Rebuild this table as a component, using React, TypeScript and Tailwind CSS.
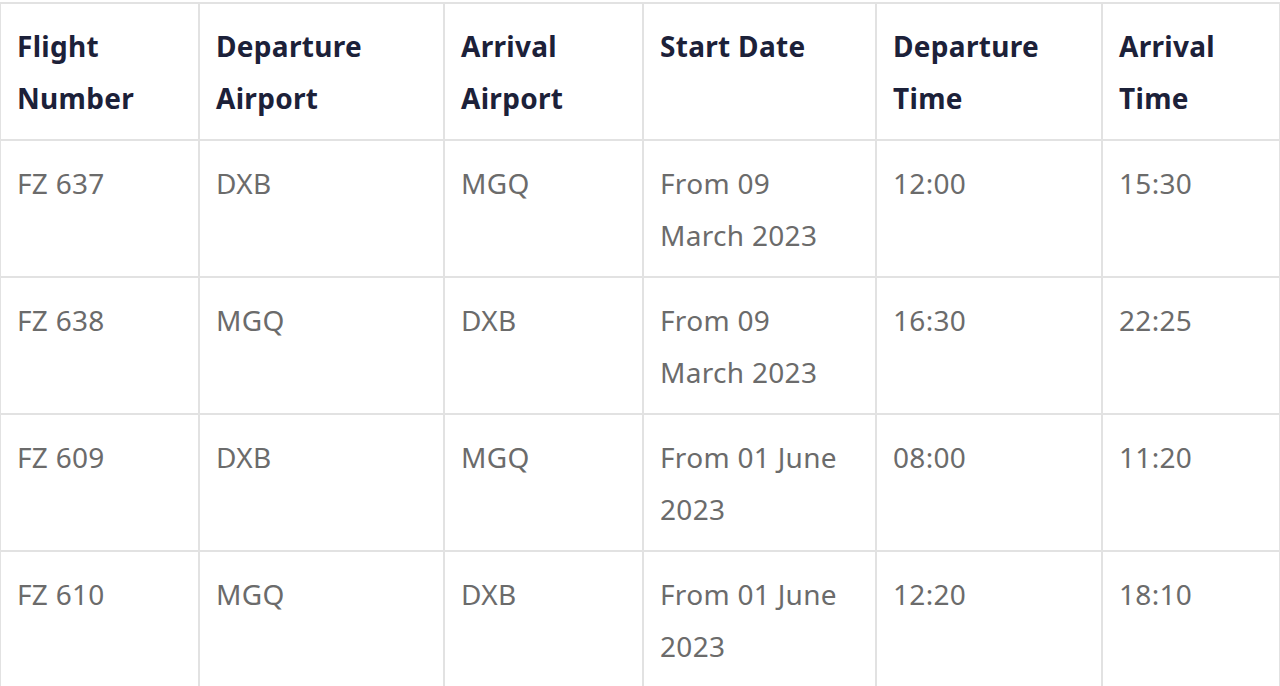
import React from 'react';

type Row = {
  flight: string;
  from: string;
  to: string;
  start: [string, string];
  dep: string;
  arr: string;
};

const rows: Row[] = [
  { flight: 'FZ 637', from: 'DXB', to: 'MGQ', start: ['From 09', 'March 2023'], dep: '12:00', arr: '15:30' },
  { flight: 'FZ 638', from: 'MGQ', to: 'DXB', start: ['From 09', 'March 2023'], dep: '16:30', arr: '22:25' },
  { flight: 'FZ 609', from: 'DXB', to: 'MGQ', start: ['From 01 June', '2023'], dep: '08:00', arr: '11:20' },
  { flight: 'FZ 610', from: 'MGQ', to: 'DXB', start: ['From 01 June', '2023'], dep: '12:20', arr: '18:10' },
];

const headers: [string, string?][] = [
  ['Flight', 'Number'],
  ['Departure', 'Airport'],
  ['Arrival', 'Airport'],
  ['Start Date'],
  ['Departure', 'Time'],
  ['Arrival', 'Time'],
];

const widths = ['w-[199px]', 'w-[245px]', 'w-[199px]', 'w-[233px]', 'w-[226px]', 'w-[178px]'];

const cell = 'border-2 border-[#e2e2e2] align-top pl-[16px] pr-[8px] pt-[16px] pb-[15px] leading-[52px] whitespace-nowrap';

export default function App() {
  return (
    <div className="bg-white w-[1280px] h-[686px] overflow-hidden pt-[2px] font-['Noto_Sans',sans-serif]">
      <table className="table-fixed border-collapse w-[1281px] -ml-[1px]">
        <colgroup>
          {widths.map((w, i) => (
            <col key={i} className={w} />
          ))}
        </colgroup>
        <thead>
          <tr>
            {headers.map((h, i) => (
              <th key={i} className={`${cell} text-left text-[28px] font-bold text-[#1c2139] tracking-[0.3px]`}>
                {h[0]}
                {h[1] && <br />}
                {h[1]}
              </th>
            ))}
          </tr>
        </thead>
        <tbody className="text-[28px] text-[#6b6b6b] tracking-[0.3px]">
          {rows.map((r) => (
            <tr key={r.flight}>
              <td className={cell}>{r.flight}</td>
              <td className={cell}>{r.from}</td>
              <td className={cell}>{r.to}</td>
              <td className={cell}>
                {r.start[0]}
                <br />
                {r.start[1]}
              </td>
              <td className={cell}>{r.dep}</td>
              <td className={cell}>{r.arr}</td>
            </tr>
          ))}
        </tbody>
      </table>
    </div>
  );
}
